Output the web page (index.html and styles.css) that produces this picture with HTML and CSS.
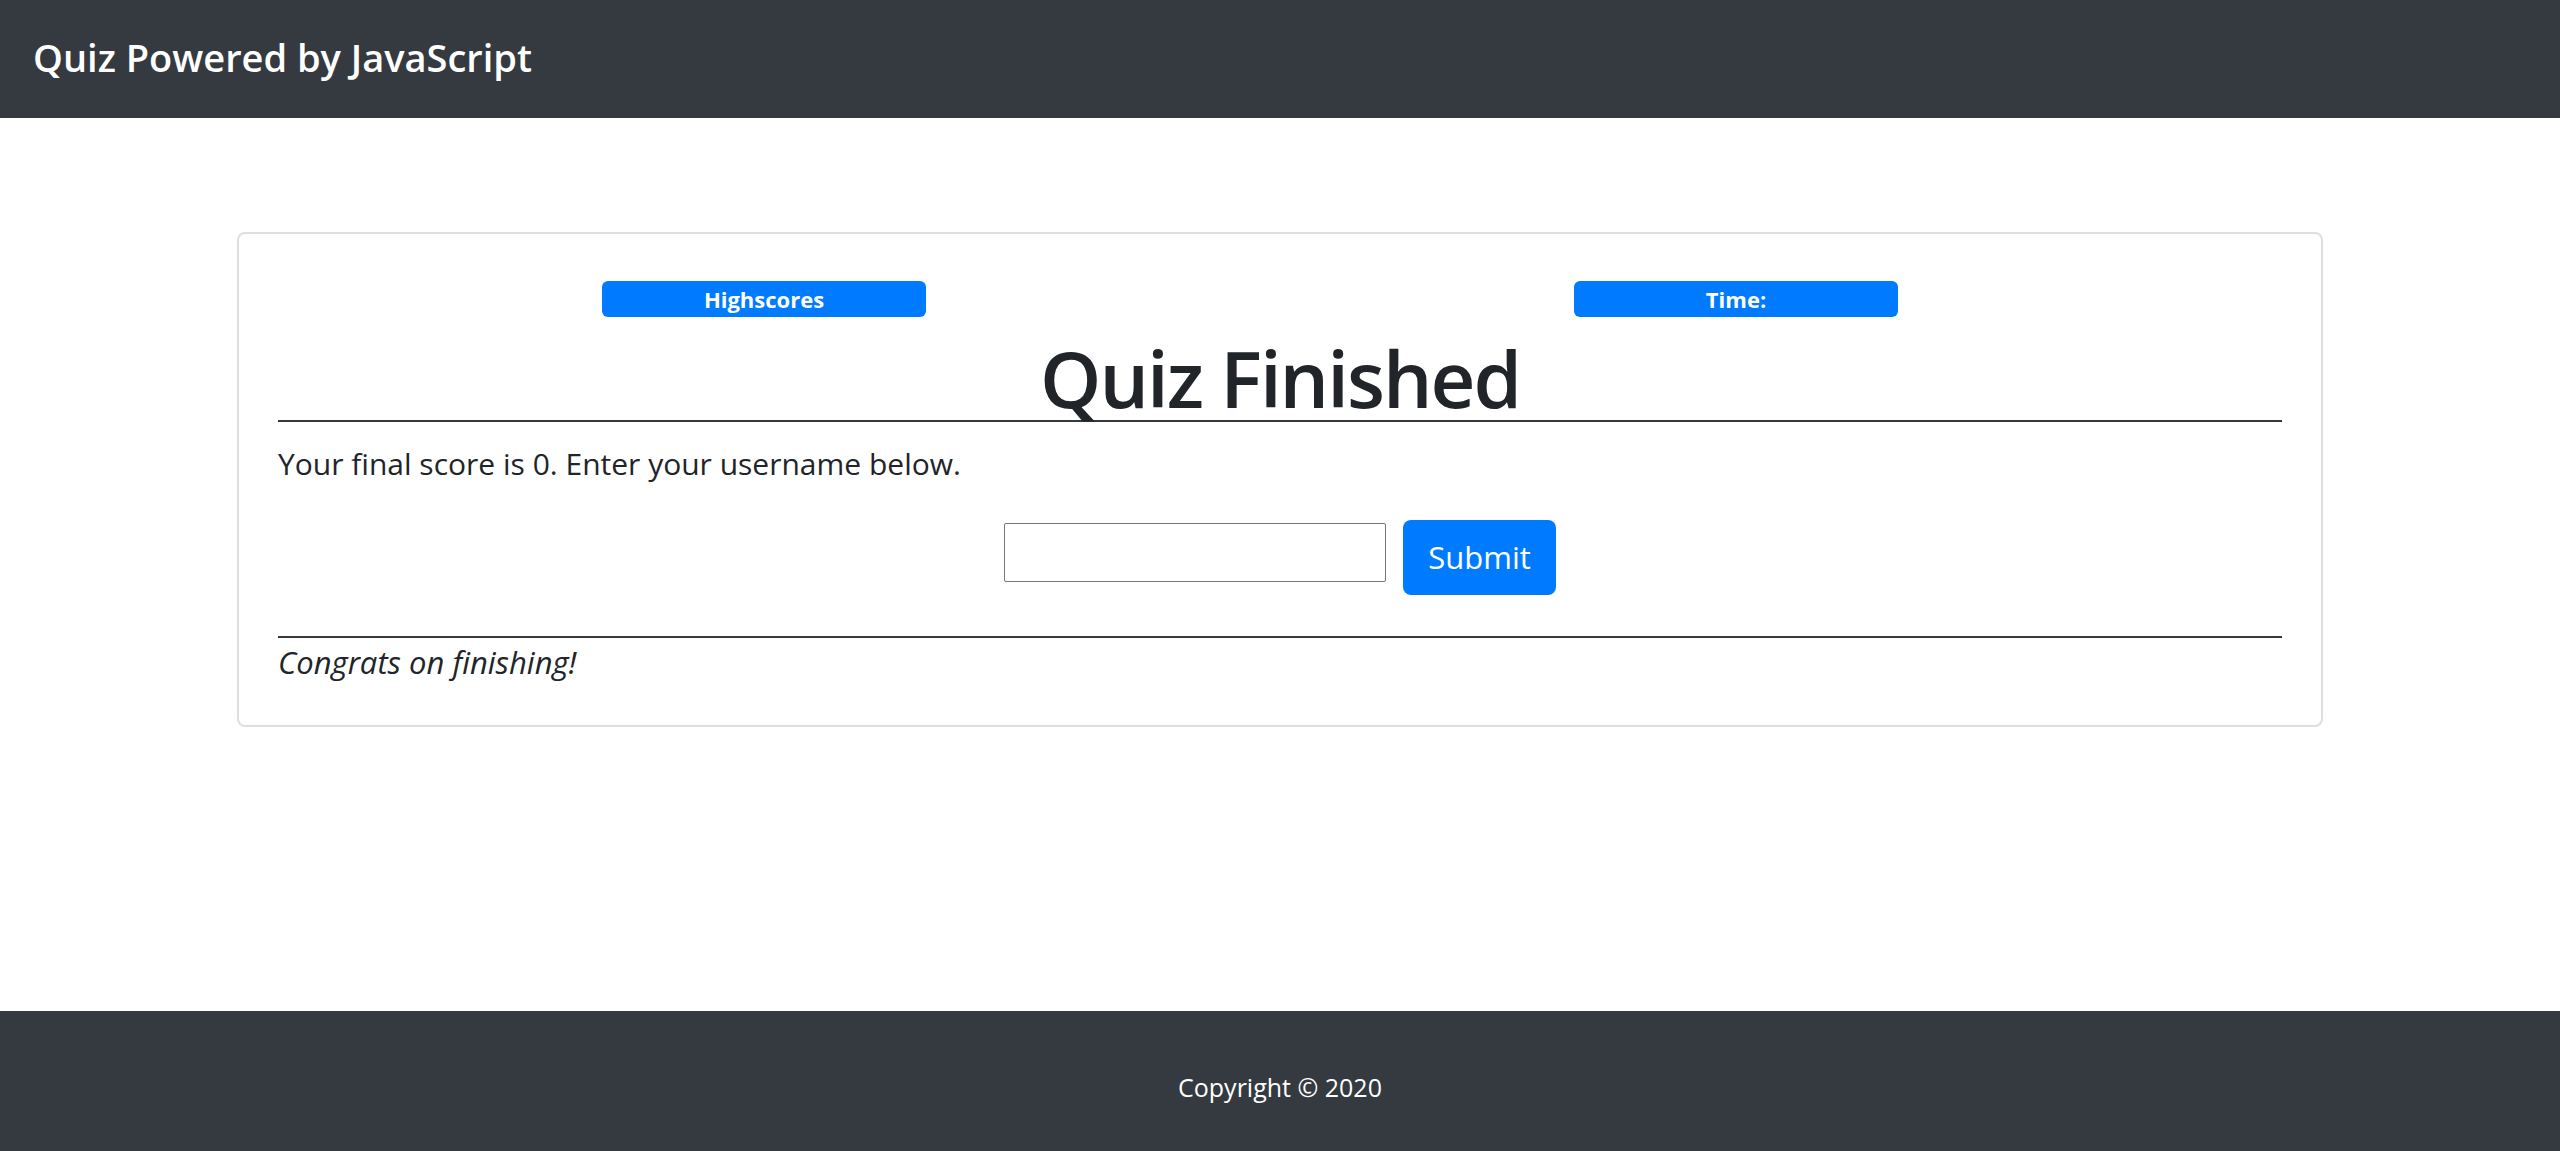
FILE: index.html
```html
<!DOCTYPE html>
<html lang="en">
<head>
<meta charset="utf-8">
<title>Quiz Powered by JavaScript</title>
<link rel="stylesheet" href="styles.css">
</head>
<body>
<header class="navbar">
  <span class="brand">Quiz Powered by JavaScript</span>
</header>
<main class="page">
  <section class="card">
    <div class="top-row">
      <button class="pill">Highscores</button>
      <button class="pill">Time:</button>
    </div>
    <h1 class="title">Quiz Finished</h1>
    <hr class="rule">
    <p class="score">Your final score is 0. Enter your username below.</p>
    <form class="entry">
      <input class="name-input" type="text">
      <button class="submit" type="button">Submit</button>
    </form>
    <hr class="rule rule-low">
    <p class="congrats">Congrats on finishing!</p>
  </section>
</main>
<footer class="footer">
  <span class="copy">Copyright © 2020</span>
</footer>
</body>
</html>
```
FILE: styles.css
```css
* { box-sizing: border-box; }
html, body { margin: 0; padding: 0; }
body {
  font-family: "Open Sans", "Noto Sans", sans-serif;
  color: #212529;
  background: #fff;
  min-height: 100vh;
  display: flex;
  flex-direction: column;
}
.navbar {
  height: 118px;
  background: #343a40;
  display: flex;
  align-items: center;
  padding: 0 33px;
}
.brand {
  color: #fff;
  font-size: 38px;
  line-height: 40px;
  font-weight: 600;
  margin-top: -4px;
}
.page {
  flex: 1;
}
.card {
  margin: 114px 237px 0;
  border: 2px solid #dfdfdf;
  border-radius: 8px;
  padding: 47px 39px 43px;
}
.top-row {
  display: flex;
  gap: 648px;
  padding-left: 324px;
}
.pill {
  width: 324px;
  height: 36px;
  border: none;
  border-radius: 6px;
  background: #007bff;
  color: #fff;
  font-family: "Open Sans", sans-serif;
  font-weight: 700;
  font-size: 22px;
  line-height: 36px;
  padding: 0;
}
.title {
  margin: 19px 0 0;
  text-align: center;
  font-size: 78px;
  line-height: 84px;
  font-weight: 600;
  letter-spacing: -2px;
  color: #212529;
}
.rule {
  margin: 0;
  border: none;
  height: 2px;
  background: #343a40;
}
.score {
  margin: 17px 0 0;
  font-size: 30px;
  line-height: 49px;
}
.entry {
  margin: 32px 0 0;
  display: flex;
  justify-content: center;
  align-items: flex-start;
  gap: 17px;
}
.name-input {
  width: 382px;
  height: 59px;
  margin-top: 3px;
  border: 1px solid #767676;
  border-radius: 2px;
  font-size: 26px;
  font-family: "Open Sans", sans-serif;
}
.submit {
  width: 153px;
  height: 75px;
  border: none;
  border-radius: 8px;
  background: #007bff;
  color: #fff;
  font-family: "Open Sans", sans-serif;
  font-size: 31px;
  line-height: 49px;
  padding: 0;
}
.rule-low {
  margin-top: 41px;
}
.congrats {
  margin: 4px 0 0;
  font-style: italic;
  font-size: 31px;
  line-height: 40px;
}
.footer {
  height: 140px;
  background: #343a40;
  display: flex;
  justify-content: center;
  padding-top: 57px;
}
.copy {
  color: #fff;
  font-size: 25px;
  line-height: 39px;
}
```
